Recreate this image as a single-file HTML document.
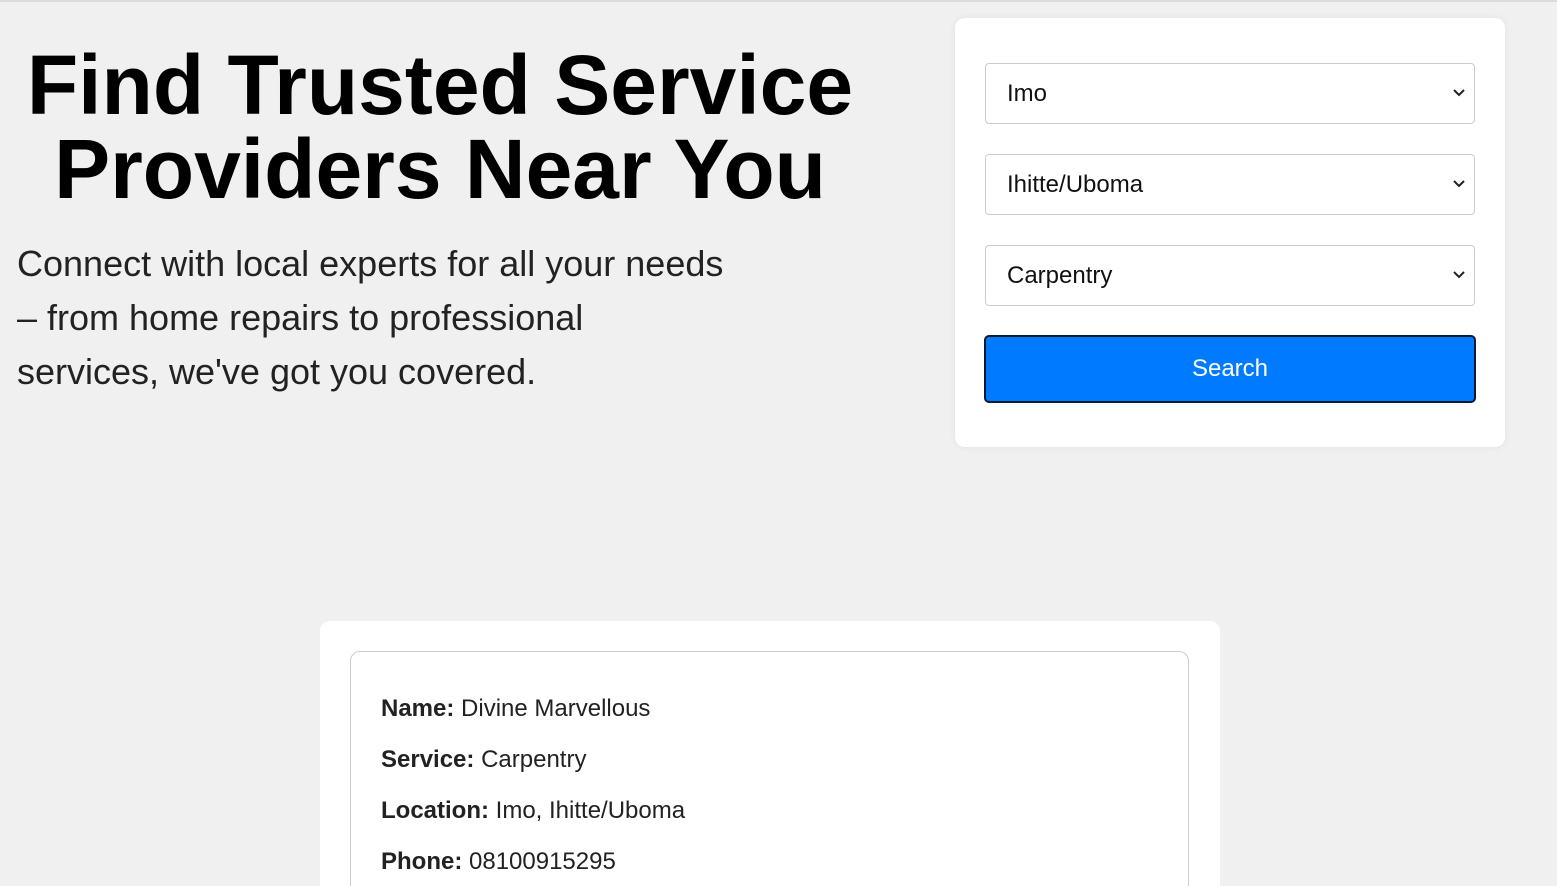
<!DOCTYPE html>
<html><head><meta charset="utf-8"><style>
*{box-sizing:border-box;margin:0;padding:0}
html,body{width:1557px;height:886px;overflow:hidden}
body{background:#f0f0f0;font-family:"Liberation Sans",Arial,sans-serif;border-top:2px solid #dcdcdc;position:relative}
h1{position:absolute;left:0;top:41px;width:880px;text-align:center;font-size:84px;line-height:84px;font-weight:bold;color:#000}
p.lead{position:absolute;left:17px;top:235px;width:712px;font-size:36px;line-height:54px;color:#222}
.card{position:absolute;left:955px;top:16px;width:550px;height:429px;background:#fff;border-radius:10px;box-shadow:0 0 8px rgba(0,0,0,.06)}
.sel{position:absolute;left:30px;width:490px;height:61px;border:1px solid #ccc;border-radius:4px;font-size:24px;line-height:59px;padding-left:21px;color:#111}
.sel svg{position:absolute;right:8px;top:24px}
.btn{position:absolute;left:29px;top:317px;width:492px;height:68px;background:#007bff;border:2px solid #0a1a2e;border-radius:5px;color:#fff;font-size:24px;text-align:center;line-height:64px}
.res{position:absolute;left:320px;top:619px;width:900px;height:267px;background:#fff;border-radius:10px 10px 0 0;overflow:hidden}
.inner{position:absolute;left:30px;top:30px;width:839px;height:237px;border:1px solid #ccc;border-bottom:none;border-radius:10px 10px 0 0;padding:43px 0 0 30px;font-size:24px;color:#222;overflow:hidden}
.inner div{height:51px}
</style></head><body>
<h1>Find Trusted Service<br>Providers Near You</h1>
<p class="lead">Connect with local experts for all your needs – from home repairs to professional services, we've got you covered.</p>
<div class="card">
<div class="sel" style="top:45px">Imo<svg width="14" height="10" viewBox="0 0 14 10"><path d="M2 2l5 5 5-5" fill="none" stroke="#222" stroke-width="2"/></svg></div>
<div class="sel" style="top:136px">Ihitte/Uboma<svg width="14" height="10" viewBox="0 0 14 10"><path d="M2 2l5 5 5-5" fill="none" stroke="#222" stroke-width="2"/></svg></div>
<div class="sel" style="top:227px">Carpentry<svg width="14" height="10" viewBox="0 0 14 10"><path d="M2 2l5 5 5-5" fill="none" stroke="#222" stroke-width="2"/></svg></div>
<div class="btn">Search</div>
</div>
<div class="res"><div class="inner">
<div><b>Name:</b> Divine Marvellous</div>
<div><b>Service:</b> Carpentry</div>
<div><b>Location:</b> Imo, Ihitte/Uboma</div>
<div><b>Phone:</b> 08100915295</div>
</div></div>
</body></html>
